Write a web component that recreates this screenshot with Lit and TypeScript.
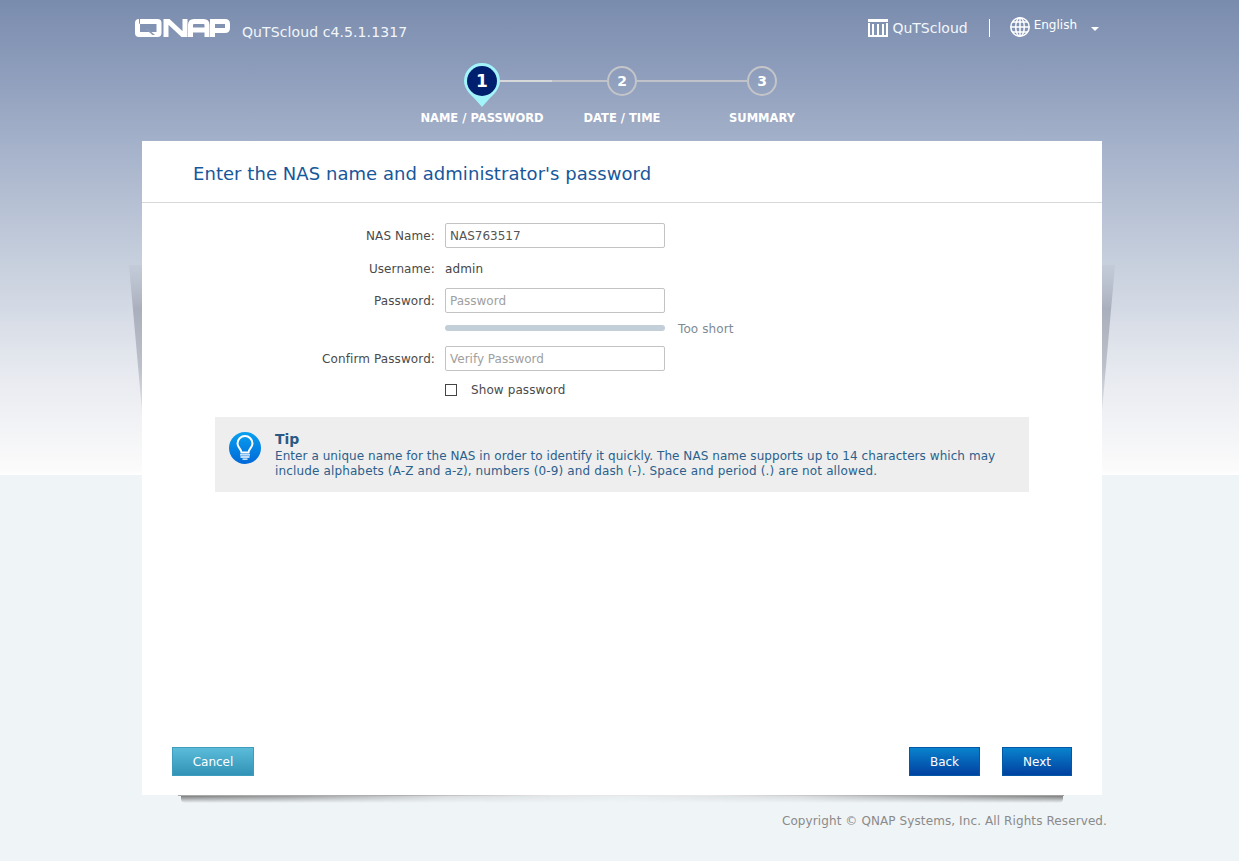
import { LitElement, html, css } from "lit";
import { customElement } from "lit/decorators.js";

const steps = [
  { n: "1", label: "NAME / PASSWORD" },
  { n: "2", label: "DATE / TIME" },
  { n: "3", label: "SUMMARY" },
];

@customElement("app-root")
export class AppRoot extends LitElement {
  static styles = css`
    :host {
      display: block;
      position: relative;
      width: 100%;
      height: 861px;
      overflow: hidden;
      font-family: "DejaVu Sans", Verdana, sans-serif;
      font-size: 12px;
      color: #444;
      background: linear-gradient(180deg, #7a8cae 0, #8a9ab9 60px, #a3b0c9 140px, #c3ccdb 250px, #e6e9ef 370px, #fbfbfb 470px, #ffffff 475px, #eff4f7 475px, #eff4f7 100%);
    }
    .wedge {
      position: absolute;
      top: 265px;
      width: 13px;
      height: 146px;
      background: linear-gradient(180deg, rgba(150, 160, 180, 0.1), #a9afbc 30%, #bcc0ca 70%, #dfe1e6);
    }
    .wedge.left { left: 129px; clip-path: polygon(0 0, 100% 0, 100% 100%); }
    .wedge.right { left: 1102px; clip-path: polygon(0 0, 100% 0, 0 100%); }
    .top {
      height: 49px;
      box-sizing: border-box;
      padding: 19px 140px 0 135px;
      display: flex;
      color: #fff;
    }
    .logo { width: 95px; height: 18px; flex: none; display: block; }
    .ver { margin: 5px 0 0 12px; font-size: 14px; color: #f2f6fa; letter-spacing: 0.1px; }
    .right { margin-left: auto; display: flex; align-items: flex-start; }
    .cloud { display: flex; align-items: center; font-size: 14px; color: #f2f6fa; height: 18px; }
    .cloud svg { margin-right: 4px; }
    .sep { width: 1px; height: 18px; background: #fff; margin: 0 20px 0 21px; }
    .lang { display: flex; align-items: flex-start; font-size: 12px; margin-top: -2px; }
    .lang svg { margin-right: 4px; }
    .lang span { margin-top: 1px; }
    .caret { width: 0; height: 0; border: 4px solid transparent; border-top: 4px solid #fff; border-bottom: 0; margin: 10px 0 0 14px; }
    .steps { display: flex; width: 420px; margin-left: 412px; height: 92px; }
    .step { width: 140px; position: relative; display: flex; flex-direction: column; align-items: center; }
    .badge { width: 40px; height: 46px; display: block; margin-top: 13px; position: relative; }
    .label {
      position: absolute;
      top: 62px;
      left: -20px;
      right: -20px;
      text-align: center;
      color: #fff;
      font-weight: 700;
      font-size: 11.5px;
      line-height: 14px;
      white-space: nowrap;
    }
    .link { position: absolute; top: 31px; left: 88px; width: 107px; height: 2px; background: #bfc2c8; }
    .link.on { background: linear-gradient(90deg, #d7d8da 0 49%, #bfc2c8 49%); }
    .step:nth-child(2) .link { left: 84px; width: 111px; }
    .card {
      margin-left: 142px;
      width: 960px;
      height: 654px;
      background: #fff;
      position: relative;
      display: flex;
      flex-direction: column;
      box-sizing: border-box;
    }
    .card::before {
      content: "";
      position: absolute;
      left: 36px;
      right: 38px;
      top: 100%;
      height: 1px;
      background: linear-gradient(90deg, #a8a8a8, #b0b0b0 25%, #e6e6e6 42%, #e8e8e8 60%, #b0b0b0 80%, #a0a0a0);
    }
    .card::after {
      content: "";
      position: absolute;
      left: 39px;
      right: 39px;
      top: calc(100% + 1px);
      height: 7px;
      border-radius: 0 0 4px 4px;
      background: linear-gradient(180deg, #7d7e7e, rgba(140, 140, 140, 0));
      -webkit-mask-image: linear-gradient(90deg, #000 0, rgba(0,0,0,.75) 12%, rgba(0,0,0,.2) 30%, rgba(0,0,0,.05) 50%, rgba(0,0,0,.2) 70%, rgba(0,0,0,.75) 90%, #000 100%);
    }
    h1 {
      margin: 0;
      height: 62px;
      box-sizing: border-box;
      padding: 21px 0 0 51px;
      border-bottom: 1px solid #d6d8da;
      font-size: 18px;
      font-weight: 400;
      line-height: 24px;
      letter-spacing: 0.05px;
      color: #17579b;
    }
    .form { display: grid; grid-template-columns: 293px 220px 1fr; column-gap: 10px; margin-top: 20px; align-items: center; letter-spacing: 0.1px; }
    .lab { text-align: right; color: #4a4a4a; }
    input {
      box-sizing: border-box;
      width: 220px;
      height: 25px;
      border: 1px solid #c3c3c3;
      border-radius: 2px;
      padding: 0 4px;
      font: inherit;
      letter-spacing: 0;
      color: #555;
      outline: none;
      display: block;
    }
    input::placeholder { color: #a0a0a0; opacity: 1; }
    .r-user { height: 40px; display: flex; align-items: center; padding-top: 1px; box-sizing: border-box; }
    .r-user.lab { justify-content: flex-end; }
    .bar { height: 6px; border-radius: 3px; background: #c2ced8; }
    .short { color: #7e8a95; margin-left: 3px; line-height: 6px; position: relative; top: 1px; }
    .gap1 { margin-top: 12px; height: 6px; }
    .gap2 { margin-top: 15px; }
    .check { grid-column: 2 / 4; display: flex; align-items: center; margin-top: 11px; height: 16px; color: #4a4a4a; }
    .check i { box-sizing: border-box; width: 12px; height: 12px; border: 1px solid #444; display: block; margin-right: 14px; background: #fff; }
    .tip {
      margin: 19px 0 0 73px;
      width: 814px;
      height: 75px;
      background: #eeeeee;
      box-sizing: border-box;
      padding: 14px 20px 0 14px;
      display: flex;
      color: #2c5f8c;
    }
    .tip svg { flex: none; width: 32px; height: 32px; margin: 1px 14px 0 0; }
    .tip b { display: block; font-size: 14px; line-height: 16px; margin-bottom: 2px; color: #2a5a84; }
    .tip p { margin: 0; line-height: 15px; white-space: nowrap; }
    .l1 { letter-spacing: 0.06px; }
    .l2 { letter-spacing: 0.14px; }
    .foot { margin-top: auto; padding: 0 30px 19px; display: flex; }
    .btn {
      box-sizing: border-box;
      height: 29px;
      line-height: 28px;
      text-align: center;
      color: #fff;
      font-size: 12px;
      border: 1px solid #0058a6;
      background: linear-gradient(180deg, #0a82cd, #0041a0);
    }
    .btn.cancel { width: 82px; margin-right: auto; border-color: #3e9dbe; background: linear-gradient(180deg, #5bbbd9, #3293b6); }
    .btn.back { width: 71px; margin-right: 22px; }
    .btn.next { width: 70px; }
    .copy { margin: 18px 132px 0 0; text-align: right; color: #8a8a8a; font-size: 12px; line-height: 16px; letter-spacing: 0.1px; }
  `;

  private logo() {
    return html`<svg class="logo" viewBox="0 0 95 18" aria-label="QNAP">
      <g fill="none" stroke="#fff" stroke-width="5">
        <path d="M5 2.500H22.500Q24 2.500 24 4V14Q24 15.500 22.500 15.500H4Q2.500 15.500 2.500 14V4Q2.500 2.500 4 2.500" />
        <path d="M31 18V2.500H33.500L47.500 15.500H50V0" />
        <path d="M55.500 18V6Q55.500 2.500 59 2.500H68.500Q72 2.500 72 6V18M55.500 11H72" />
        <path d="M77.500 18V2.500H90Q92.500 2.500 92.500 5V9Q92.500 11.500 90 11.500H77.500" />
      </g>
      <path d="M13 10l7 6h-2.500l-7-6z" fill="#8a9ab8" />
    </svg>`;
  }

  private badge(n: string, active: boolean) {
    if (active) {
      return html`<svg class="badge" viewBox="0 0 40 46">
        <path d="M2 19A18 18 0 1 1 38 19C38 27 31 33 28 36L20 45L12 36C9 33 2 27 2 19Z" fill="#a2f4fa" />
        <circle cx="20" cy="19" r="15" fill="#001f6f" />
        <text x="20" y="25" text-anchor="middle" font-family="DejaVu Sans" font-weight="700" font-size="17" fill="#fff">${n}</text>
      </svg>`;
    }
    return html`<svg class="badge" viewBox="0 0 40 46">
      <circle cx="20" cy="19" r="14" fill="none" stroke="#c4c5c9" stroke-width="2" />
      <text x="20" y="24" text-anchor="middle" font-family="DejaVu Sans" font-weight="700" font-size="14" fill="#fff">${n}</text>
    </svg>`;
  }

  render() {
    return html`
      <div class="wedge left"></div>
      <div class="wedge right"></div>
      <div class="top">
        ${this.logo()}
        <div class="ver">QuTScloud c4.5.1.1317</div>
        <div class="right">
          <div class="cloud">
            <svg width="20" height="18" viewBox="0 0 20 18" fill="#fff">
              <rect x="0" y="0" width="20" height="3" />
              <rect x="0" y="4" width="2" height="14" /><rect x="4" y="5" width="2" height="12" />
              <rect x="9" y="5" width="2" height="12" /><rect x="14" y="5" width="2" height="12" />
              <rect x="18" y="4" width="2" height="14" /><rect x="0" y="16" width="20" height="2" />
            </svg>
            QuTScloud
          </div>
          <div class="sep"></div>
          <div class="lang">
            <svg width="20" height="20" viewBox="0 0 20 20" fill="none" stroke="#fff" stroke-width="1.500">
              <circle cx="10" cy="10" r="9.200" />
              <ellipse cx="10" cy="10" rx="4.300" ry="9.200" />
              <path d="M10 .8V19.200M.8 10H19.200M2.300 5H17.700M2.300 15H17.700" />
            </svg>
            <span>English</span>
            <div class="caret"></div>
          </div>
        </div>
      </div>
      <div class="steps">
        ${steps.map(
          (s, i) => html`<div class="step">
            ${i < 2 ? html`<div class="link ${i === 0 ? "on" : ""}"></div>` : ""}
            ${this.badge(s.n, i === 0)}
            <div class="label">${s.label}</div>
          </div>`
        )}
      </div>
      <div class="card">
        <h1>Enter the NAS name and administrator's password</h1>
        <div class="form">
          <div class="lab">NAS Name:</div>
          <input value="NAS763517" />
          <div></div>
          <div class="lab r-user">Username:</div>
          <div class="r-user">admin</div>
          <div></div>
          <div class="lab">Password:</div>
          <input placeholder="Password" />
          <div></div>
          <div class="gap1"></div>
          <div class="bar gap1"></div>
          <div class="short gap1">Too short</div>
          <div class="lab gap2">Confirm Password:</div>
          <input class="gap2" placeholder="Verify Password" />
          <div></div>
          <div></div>
          <div class="check"><i></i>Show password</div>
        </div>
        <div class="tip">
          <svg viewBox="0 0 32 32">
            <defs>
              <linearGradient id="tipg" x1="0" y1="0" x2="0" y2="1">
                <stop offset="0" stop-color="#0aa0f0" />
                <stop offset="1" stop-color="#0068d8" />
              </linearGradient>
            </defs>
            <circle cx="16" cy="16" r="16" fill="url(#tipg)" />
            <path d="M12.500 20.500C12.500 17 8.500 15.500 8.500 11.500A7.500 7.500 0 0 1 23.500 11.500C23.500 15.500 19.500 17 19.500 20.500Z" fill="none" stroke="#fff" stroke-width="2" />
            <path d="M11 22.800H21M11.500 25H20.500M13.500 27.200H18.500" stroke="#fff" stroke-width="1.300" />
          </svg>
          <div>
            <b>Tip</b>
            <p><span class="l1">Enter a unique name for the NAS in order to identify it quickly. The NAS name supports up to 14 characters which may</span><br /><span class="l2">include alphabets (A-Z and a-z), numbers (0-9) and dash (-). Space and period (.) are not allowed.</span></p>
          </div>
        </div>
        <div class="foot">
          <div class="btn cancel">Cancel</div>
          <div class="btn back">Back</div>
          <div class="btn next">Next</div>
        </div>
      </div>
      <div class="copy">Copyright © QNAP Systems, Inc. All Rights Reserved.</div>
    `;
  }
}
